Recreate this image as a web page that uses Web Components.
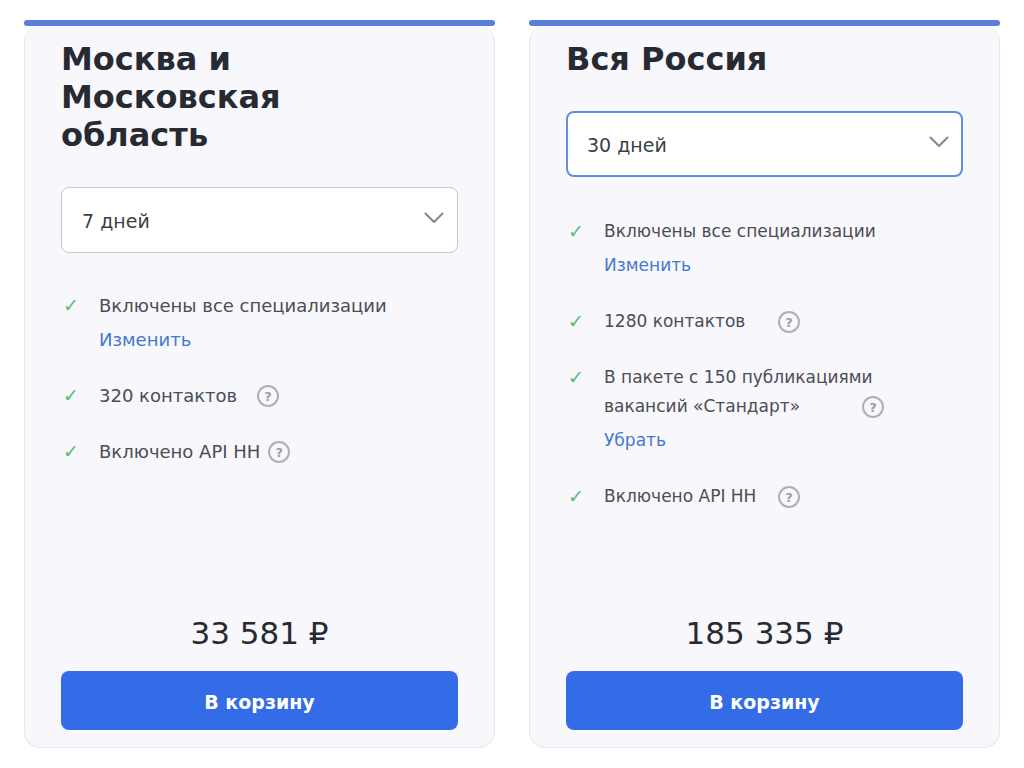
<!DOCTYPE html>
<html lang="ru">
<head>
<meta charset="utf-8">
<meta name="viewport" content="width=device-width, initial-scale=1">
<title>Тарифы</title>
<style>
  body { margin: 0; background: #fff; color: #272a31; font-family: "DejaVu Sans", sans-serif; }
</style>
</head>
<body>
<price-board>
  <price-card period="7 дней" price="33 581 ₽">
    <span slot="title">Москва и Московская область</span>
    <plan-feature action="Изменить">Включены все специализации</plan-feature>
    <plan-feature hint="Сколько контактов можно открыть">320 контактов</plan-feature>
    <plan-feature hint="Доступ к базе через API">Включено API HH</plan-feature>
  </price-card>
  <price-card period="30 дней" price="185 335 ₽" active>
    <span slot="title">Вся Россия</span>
    <plan-feature action="Изменить">Включены все специализации</plan-feature>
    <plan-feature hint="Сколько контактов можно открыть">1280 контактов</plan-feature>
    <plan-feature wide hint="Публикации вакансий" action="Убрать"><span slot="lead">В пакете с 150 публикациями</span>вакансий «Стандарт»</plan-feature>
    <plan-feature hint="Доступ к базе через API">Включено API HH</plan-feature>
  </price-card>
</price-board>

<script>
class Base extends HTMLElement {
  render(html) {
    this.attachShadow({ mode: 'open' }).innerHTML = html;
  }
}

customElements.define('price-board', class extends Base {
  connectedCallback() {
    this.render(`<style>
      :host { display: grid; grid-template-columns: repeat(auto-fit, minmax(min(100%, 400px), 1fr)); gap: 34px; box-sizing: border-box; min-height: 100vh; padding: 20px 24px; }
    </style><slot></slot>`);
  }
});

customElements.define('period-select', class extends Base {
  connectedCallback() {
    const value = this.getAttribute('value');
    const options = ['7 дней', '30 дней']
      .map(o => `<option${o === value ? ' selected' : ''}>${o}</option>`).join('');
    this.render(`<style>
      :host { display: block; }
      .box { display: grid; align-items: center; }
      select, svg { grid-area: 1 / 1; }
      select { appearance: none; box-sizing: border-box; width: 100%; height: 66px; margin: 0; padding: 2px 48px 0 20px; border: 1px solid #c3c8cc; border-radius: 8px; background: #fff; color: #3c3f45; font: 19px "DejaVu Sans", sans-serif; outline: none; }
      :host([active]) select { padding-left: 19px; border: 2px solid #5f90de; }
      svg { justify-self: end; width: 20px; height: 12px; margin: 0 14px 4px 0; pointer-events: none; }
    </style>
    <label class="box">
      <select aria-label="Период">${options}</select>
      <svg viewBox="0 0 20 12" aria-hidden="true"><path d="M1.5 1.5 10 10 18.5 1.5" fill="none" stroke="#85878c" stroke-width="2" stroke-linecap="round" stroke-linejoin="round"/></svg>
    </label>`);
  }
});

customElements.define('plan-feature', class extends Base {
  connectedCallback() {
    const hint = this.getAttribute('hint');
    const action = this.getAttribute('action');
    this.render(`<style>
      :host { display: grid; grid-template-columns: 38px 1fr; line-height: 29px; }
      .mark { padding-left: 2px; box-sizing: border-box; color: #55bd7c; font-size: 19px; }
      .row { display: flex; align-items: center; gap: 8px; }
      .text { min-width: var(--text-width, 150px); }
      :host([wide]) .text { min-width: 250px; }
      ::slotted([slot=lead]) { display: block; }
      button { flex: none; width: 22px; height: 22px; padding: 1px 0 0; border: 2px solid #adb1b7; border-radius: 50%; background: none; color: #9b9fa6; font: bold 13px/17px "DejaVu Sans", sans-serif; }
      a { display: block; width: fit-content; margin-top: 5px; color: #4379d2; text-decoration: none; }
    </style>
    <span class="mark" aria-hidden="true">✓</span>
    <div>
      <slot name="lead"></slot>
      <div class="row"><span class="text"><slot></slot></span>${hint ? `<button type="button" aria-label="${hint}">?</button>` : ''}</div>
      ${action ? `<a href="#">${action}</a>` : ''}
    </div>`);
  }
});

customElements.define('price-card', class extends Base {
  connectedCallback() {
    const active = this.hasAttribute('active') ? ' active' : '';
    this.render(`<style>
      :host { display: flex; flex-direction: column; color: #272a31; }
      .bar { flex: none; height: 6px; border-radius: 3px; background: #5b7edb; }
      .card { flex: 1; display: flex; flex-direction: column; box-sizing: border-box; padding: 14px 36px 17px; border: 1px solid #e6e8ee; border-top: 0; border-radius: 16px; background: #f7f7fc; }
      h2 { max-width: 260px; margin: 0 0 33px; font-size: 32px; line-height: 38px; }
      .features { display: flex; flex-direction: column; gap: 27px; margin: 38px 0; color: #4b4e55; font-size: 18px; }
      :host([active]) .features { --text-width: 166px; margin-top: 40px; font-size: 17px; }
      .price { margin: auto 0 18px; text-align: center; font-size: 31px; line-height: 40px; }
      .buy { height: 59px; padding: 2px 0 0; border: 0; border-radius: 8px; background: #336ce6; color: #fff; font: bold 19px "DejaVu Sans", sans-serif; }
    </style>
    <div class="bar"></div>
    <section class="card">
      <h2><slot name="title"></slot></h2>
      <period-select value="${this.getAttribute('period')}"${active}></period-select>
      <div class="features"><slot></slot></div>
      <div class="price">${this.getAttribute('price')}</div>
      <button class="buy" type="button">В корзину</button>
    </section>`);
  }
});
</script>
</body>
</html>
